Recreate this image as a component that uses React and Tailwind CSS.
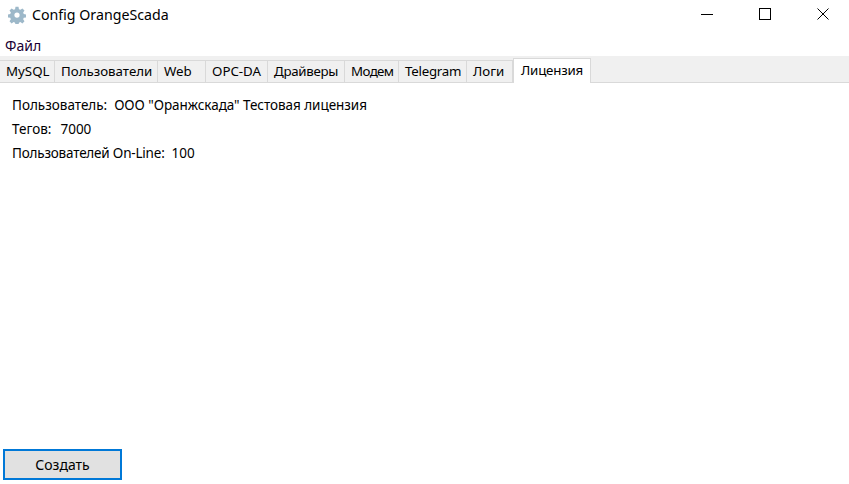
import { useState } from "react";

const tabs = [
    { label: "MySQL", width: "w-[55px]" },
    { label: "Пользователи", width: "w-[103px]" },
    { label: "Web", width: "w-[48px]" },
    { label: "OPC-DA", width: "w-[62px]" },
    { label: "Драйверы", width: "w-[77px] tracking-[-0.3px]" },
    { label: "Модем", width: "w-[54px] tracking-[-0.6px]" },
    { label: "Telegram", width: "w-[68px] tracking-[-0.25px]" },
    { label: "Логи", width: "w-[46px]" },
];

function GearIcon() {
    return (
        <svg width="18" height="18" viewBox="0 0 24 24" fill="#9db8c9" fillRule="evenodd">
            <path d="M10 1h4l.6 3.2 1.9.8 2.7-1.8 2.8 2.8-1.8 2.7.8 1.9 3 .6v4l-3 .6-.8 1.9 1.8 2.7-2.8 2.8-2.7-1.8-1.9.8-.6 3h-4l-.6-3-1.9-.8-2.7 1.8-2.8-2.8 1.8-2.7-.8-1.9-3-.6v-4l3-.6.8-1.9-1.8-2.7 2.8-2.8 2.7 1.8 1.9-.8zM12 8.5a3.5 3.5 0 1 0 0 7 3.5 3.5 0 0 0 0-7z" />
        </svg>
    );
}

export default function App() {
    const [active] = useState("Лицензия");

    return (
        <div className="flex flex-col h-[484px] w-[849px] bg-white text-[13.3px] text-black font-['Noto_Sans','Open_Sans',sans-serif] overflow-hidden">
            {/* title bar */}
            <div className="flex h-[30px] shrink-0">
                <div className="flex items-center gap-[6px] pl-[8px] flex-1">
                    <GearIcon />
                    <span className="text-[14.2px]">Config OrangeScada</span>
                </div>
                <div className="flex items-center gap-[12px] h-[28px] pr-[3px]">
                    <button className="flex items-center justify-center w-[46px] h-full">
                        <svg width="12" height="12" viewBox="0 0 12 12"><path d="M0 6.5h12" stroke="#000" /></svg>
                    </button>
                    <button className="flex items-center justify-center w-[46px] h-full">
                        <svg width="12" height="12" viewBox="0 0 12 12"><rect x="0.5" y="0.5" width="11" height="11" fill="none" stroke="#000" /></svg>
                    </button>
                    <button className="flex items-center justify-center w-[46px] h-full">
                        <svg width="12" height="12" viewBox="0 0 12 12"><path d="M0.5 0.5l11 11M11.5 0.5l-11 11" stroke="#000" /></svg>
                    </button>
                </div>
            </div>

            {/* menu */}
            <div className="h-[26px] shrink-0 pl-[5px] pt-[4px] flex items-center text-[#1a0033] text-[14px]">Файл</div>

            {/* tabs */}
            <div className="relative flex items-end h-[27px] shrink-0 bg-[#f0f0f0] border-b border-[#d9d9d9]">
                {tabs.map((tab) => (
                    <div
                        key={tab.label}
                        className={`${tab.width} h-[22px] flex items-center pl-[6px] bg-[#f0f0f0] border-t border-r border-[#d9d9d9] whitespace-nowrap`}
                    >
                        {tab.label}
                    </div>
                ))}
                <div className="absolute left-[513px] top-[2px] w-[78px] h-[25px] flex items-center pl-[7px] pb-[1px] bg-white border-x border-t border-[#d9d9d9] tracking-[-0.2px]">
                    {active}
                </div>
            </div>

            {/* licence info */}
            <div className="flex-1 flex flex-col gap-[3px] pl-[12px] pt-[12px] text-[13.5px]">
                <div className="h-[21px] flex gap-[7px] items-center"><span>Пользователь:</span><span className="tracking-[-0.05px]">ООО "Оранжскада" Тестовая лицензия</span></div>
                <div className="h-[21px] flex gap-[9px] items-center"><span>Тегов:</span><span>7000</span></div>
                <div className="h-[21px] flex gap-[7px] items-center"><span className="tracking-[-0.2px]">Пользователей On-Line:</span><span>100</span></div>
            </div>

            {/* footer */}
            <div className="shrink-0 pl-[3px] pb-[4px]">
                <button className="w-[119px] h-[31px] bg-[#e1e1e1] border-2 border-[#0078d7] flex items-center justify-center text-[14px]">
                    Создать
                </button>
            </div>
        </div>
    );
}
